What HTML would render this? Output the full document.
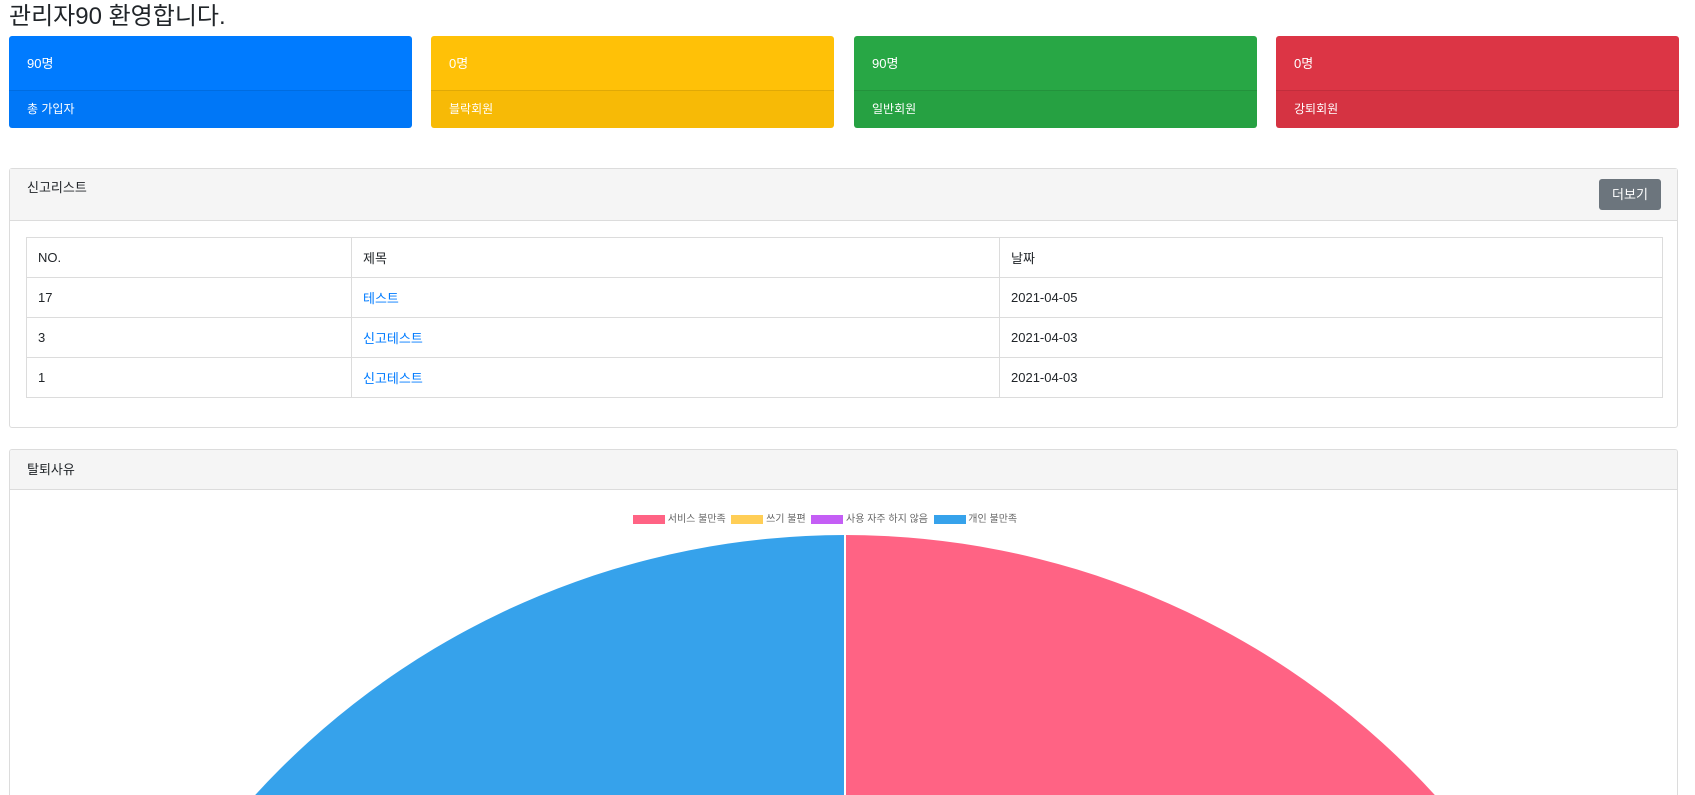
<!DOCTYPE html>
<html><head><meta charset="utf-8"><style>
html,body{margin:0;width:1695px;height:795px;overflow:hidden}
body{background:#fff;font-family:"Liberation Sans","Noto Sans CJK KR",sans-serif;color:#212529;position:relative}
.a{position:absolute}
h1{position:absolute;left:9px;top:0;margin:0;font-size:24px;font-weight:400;line-height:34px}
.card{position:absolute;top:36px;width:403px;height:92px;border-radius:3px;color:#fff;font-size:13px;overflow:hidden}
.card .t{height:54px;line-height:56px;padding-left:18px;border-bottom:1px solid rgba(0,0,0,.12)}
.card .b{height:37px;line-height:37px;padding-left:18px;font-size:12px;background:rgba(0,0,0,.03)}
.panel{position:absolute;left:9px;width:1669px;border:1px solid #dcdcdc;border-radius:3px;background:#fff;box-sizing:border-box}
.ph{background:#f5f5f5;border-bottom:1px solid #dcdcdc;font-size:13px;padding-left:17px;box-sizing:border-box}
table{position:absolute;left:16px;top:68px;width:1637px;border-collapse:collapse;font-size:13px}
td{border:1px solid #dcdcdc;height:39px;padding:0 11px}
a{color:#007bff;text-decoration:none}
</style></head><body>
<h1>관리자90 환영합니다.</h1>
<div class="card" style="left:9px;background:#007bff"><div class="t">90명</div><div class="b">총 가입자</div></div>
<div class="card" style="left:431px;background:#ffc107"><div class="t">0명</div><div class="b">블락회원</div></div>
<div class="card" style="left:854px;background:#28a745"><div class="t">90명</div><div class="b">일반회원</div></div>
<div class="card" style="left:1276px;background:#dc3545"><div class="t">0명</div><div class="b">강퇴회원</div></div>

<div class="panel" style="top:168px;height:260px">
<div class="ph" style="height:52px;line-height:37px;position:relative">신고리스트
<div class="a" style="right:16px;top:10px;width:62px;height:31px;background:#6c757d;border-radius:3px;color:#fff;font-size:13px;line-height:31px;text-align:center">더보기</div></div>
<table>
<tr><td style="width:302px">NO.</td><td style="width:625px">제목</td><td>날짜</td></tr>
<tr><td>17</td><td><a>테스트</a></td><td>2021-04-05</td></tr>
<tr><td>3</td><td><a>신고테스트</a></td><td>2021-04-03</td></tr>
<tr><td>1</td><td><a>신고테스트</a></td><td>2021-04-03</td></tr>
</table></div>

<div class="panel" style="top:449px;height:346px;overflow:hidden;border-bottom:none;border-radius:3px 3px 0 0">
<div class="ph" style="height:40px;line-height:40px">탈퇴사유</div>
<div class="a" style="left:623px;top:63px;font-size:10px;color:#666;white-space:nowrap;line-height:13px">
<span style="display:inline-block;width:32px;height:9px;background:#ff6384;vertical-align:middle"></span> 서비스 불만족&nbsp;
<span style="display:inline-block;width:32px;height:9px;background:#ffce56;vertical-align:middle"></span> 쓰기 불편&nbsp;
<span style="display:inline-block;width:32px;height:9px;background:#c45ef5;vertical-align:middle"></span> 사용 자주 하지 않음&nbsp;
<span style="display:inline-block;width:32px;height:9px;background:#36a2eb;vertical-align:middle"></span> 개인 불만족</div>
<svg class="a" style="left:0;top:0" width="1669" height="346">
<path d="M835 884 L835 85 A799 799 0 0 0 36 884 Z" fill="#36a2eb"/>
<path d="M835 884 L835 85 A799 799 0 0 1 1634 884 Z" fill="#ff6384"/>
<line x1="835" y1="85" x2="835" y2="346" stroke="#fff" stroke-width="2"/>
</svg>
</div>
</body></html>
